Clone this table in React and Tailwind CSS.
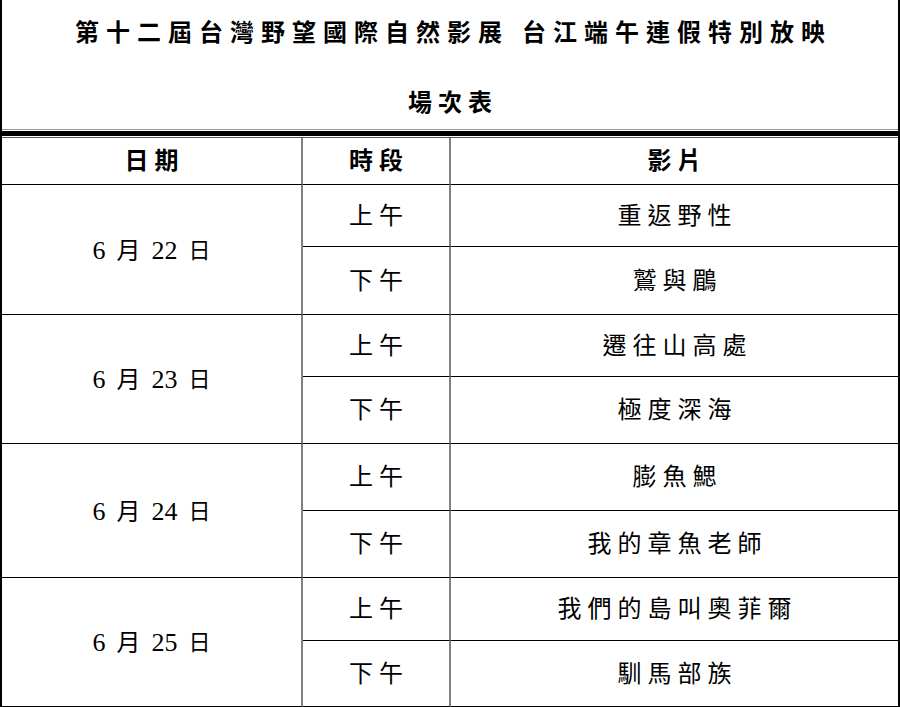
import React from 'react';

const schedule = [
  { month: '6', day: '22', am: '重返野性', pm: '鷲與鶥' },
  { month: '6', day: '23', am: '遷往山高處', pm: '極度深海' },
  { month: '6', day: '24', am: '膨魚鰓', pm: '我的章魚老師' },
  { month: '6', day: '25', am: '我們的島叫奧菲爾', pm: '馴馬部族' },
];

const font = { fontFamily: '"Liberation Serif", "Noto Sans CJK TC", serif' };

const App = () => {
  return (
    <div className="w-[900px] h-[707px] bg-white text-black overflow-hidden" style={font}>
      <div className="h-[707px] border-x-2 border-black flex flex-col">
        {/* title */}
        <div className="h-[129px] flex flex-col">
          <div className="h-[66px] flex items-center justify-center text-[24px] font-bold tracking-[7px] pl-[7px] leading-[24px]">
            第十二屆台灣野望國際自然影展 台江端午連假特別放映
          </div>
          <div className="pt-[25px] text-center text-[24px] font-bold tracking-[6px] pl-[6px] leading-[24px]">
            場次表
          </div>
        </div>
        <div className="h-px bg-[#9a9a9a]" />
        <div className="h-px" />
        <div className="h-[5px] bg-black" />
        <div className="h-px" />
        <div className="h-px bg-[#555]" />

        {/* table */}
        <div className="grid grid-cols-[301px_148px_1fr] grid-rows-[47px_62px_68px_62px_67px_67px_67px_63px_66px] text-[24px] leading-[24px] tracking-[6px]">
          <div className="border-r-2 border-r-[#808080] border-b border-b-black flex items-center justify-center pl-[6px] font-bold">日期</div>
          <div className="border-r-2 border-r-[#808080] border-b border-b-black flex items-center justify-center pl-[6px] font-bold">時段</div>
          <div className="border-b border-b-black flex items-center justify-center pl-[6px] font-bold">影片</div>
          {schedule.map((d) => (
            <React.Fragment key={d.day}>
              <div className="row-span-2 border-r-2 border-r-[#808080] border-b border-b-black flex items-center justify-center gap-[11px] tracking-normal pt-[2px]">
                <span className="text-[26px]">{d.month}</span>
                <span>月</span>
                <span className="text-[26px]">{d.day}</span>
                <span className="text-[22px]">日</span>
              </div>
              <div className="border-r-2 border-r-[#808080] border-b border-b-black flex items-center justify-center pl-[6px]">上午</div>
              <div className="border-b border-b-black flex items-center justify-center pl-[6px]">{d.am}</div>
              <div className="border-r-2 border-r-[#808080] border-b border-b-black flex items-center justify-center pl-[6px]">下午</div>
              <div className="border-b border-b-black flex items-center justify-center pl-[6px]">{d.pm}</div>
            </React.Fragment>
          ))}
        </div>
      </div>
    </div>
  );
};

export default App;
